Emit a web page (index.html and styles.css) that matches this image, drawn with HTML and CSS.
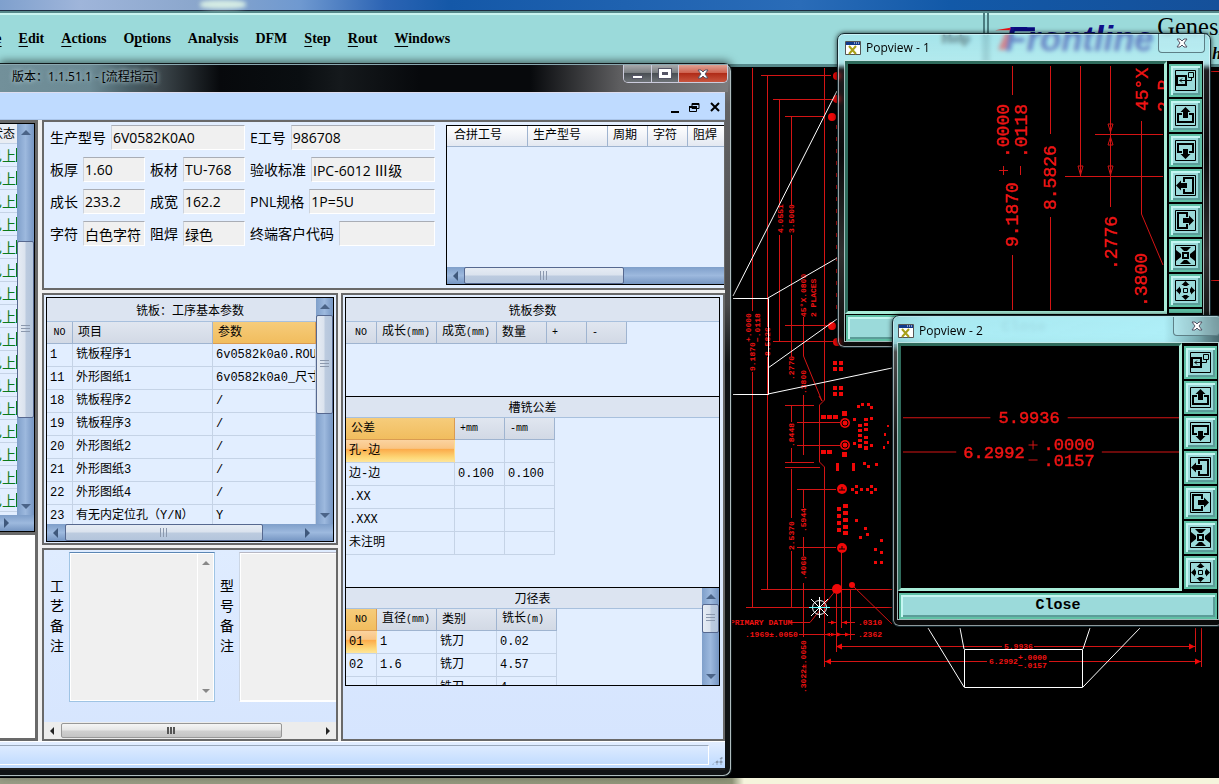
FILE: index.html
```html
<!DOCTYPE html>
<html lang="zh-CN">
<head>
<meta charset="utf-8">
<title>Genesis</title>
<link rel="stylesheet" href="styles.css">
</head>
<body>
<svg class="defs" aria-hidden="true">
  <symbol id="i-home" viewBox="0 0 21 21"><path d="M.5.5h20v20H.5z" fill="none" stroke="#000"/><path d="M2 6h9v9H2z" fill="none" stroke="#000" stroke-width="2"/><path d="M13.500 2.500h5v5h-5zM16.500 7.500v3H4.500M7 8.500l-2 2 2 2" fill="none" stroke="#000"/></symbol>
  <symbol id="i-up" viewBox="0 0 21 21"><path d="M.5.5h20v20H.5z" fill="none" stroke="#000"/><path d="M7 9H3v8h15V9h-4" fill="none" stroke="#000" stroke-width="2"/><path d="M10.500 2l5 5h-2.500v6H8V7H5.500z"/></symbol>
  <symbol id="i-down" viewBox="0 0 21 21"><path d="M.5.5h20v20H.5z" fill="none" stroke="#000"/><path d="M7 12H3V4h15v8h-4" fill="none" stroke="#000" stroke-width="2"/><path d="M10.500 19l5-5h-2.500V9H8v5H5.500z"/></symbol>
  <symbol id="i-left" viewBox="0 0 21 21"><path d="M.5.5h20v20H.5z" fill="none" stroke="#000"/><path d="M9 7V3h9v15H9v-4" fill="none" stroke="#000" stroke-width="2"/><path d="M1 10.500l5-5V8h6v5H6v2.500z"/></symbol>
  <symbol id="i-right" viewBox="0 0 21 21"><path d="M.5.5h20v20H.5z" fill="none" stroke="#000"/><path d="M12 7V3H3v15h9v-4" fill="none" stroke="#000" stroke-width="2"/><path d="M19 10.500l-5-5V8H8v5h6v2.500z"/></symbol>
  <symbol id="i-in" viewBox="0 0 21 21"><path d="M.5.5h20v20H.5z" fill="none" stroke="#000"/><path d="M8 8h5v5H8z" fill="none" stroke="#000" stroke-width="2"/><path d="M5 2h11l-4 4H9zM5 19h11l-4-4H9zM1 5l5 4v3l-5 4zM20 5l-5 4v3l5 4z"/></symbol>
  <symbol id="i-out" viewBox="0 0 21 21"><path d="M.5.5h20v20H.5z" fill="none" stroke="#000"/><path d="M8.500 8.500h4v4h-4z" fill="none" stroke="#000"/><path d="M10.500 1l4 4h-2v1h-4V5h-2zM10.500 20l4-4h-2v-1h-4v1h-2zM1 10.500l4-4v2h1v4H5v2zM20 10.500l-4-4v2h-1v4h1v2z"/></symbol>
  <symbol id="i-win" viewBox="0 0 16 14"><path d="M.5.5h15v13H.5z" fill="#fff" stroke="#555"/><path d="M1 1h14v3H1z" fill="#123a8c"/><path d="M9 2h1M11 2h1M13 2h1" stroke="#fff"/><path d="M4 5l7 8M11 5l-7 8" stroke="#a8a018" stroke-width="2"/></symbol>
  <symbol id="i-x" viewBox="0 0 12 10"><path d="M1 1h3l2 2 2-2h3L8 5l3 4H8L6 7 4 9H1l3-4z" fill="#fff" stroke="#556" stroke-width="1"/></symbol>
</svg>

<div class="desktop">
  <div class="strip"><i></i></div>
  <header class="head">
    <nav class="menu">
      <a href="#" class="cut">Fil<u>e</u></a>
      <a href="#"><u>E</u>dit</a><a href="#"><u>A</u>ctions</a><a href="#">O<u>p</u>tions</a><a href="#">Analysis</a><a href="#">DFM</a><a href="#"><u>S</u>tep</a><a href="#"><u>R</u>out</a><a href="#"><u>W</u>indows</a>
      <a href="#" class="help">Help</a>
    </nav>
    <div class="logo">
      <svg viewBox="990 13 229 50" preserveAspectRatio="xMinYMin slice">
        <path d="M996 30l18-3v3zM999 49l7-16h7l-6 16z" fill="#e11"/>
        <text x="1006" y="50" class="brand">Frontline</text>
        <path d="M1015 27h20v4h-21z" fill="#0a0a80"/>
        <text x="1155" y="35" class="gen">Genesis</text>
        <text x="1209" y="58" class="sub">h</text>
      </svg>
    </div>
  </header>

  <main class="cad">
    <svg viewBox="0 67 1219 711" preserveAspectRatio="xMinYMin slice">
      <g class="r">
        <path d="M752.500 68V311M752.500 372V607M767.500 75V327M767.500 357V589M761 75.500H831M779.500 100V205M779.500 235V341M773 99.500H833M791.500 117V205M791.500 235V357M785 116.500H825M824.500 68V400L819.500 405V462L824.500 467V667M785 325.500H832M773 341.500H837M803.500 317V356L822 401M819 396l3 5M803.500 395V455M785 405.500H814M791.500 406V422M797 422.500H840M797 445.500H840M791.500 448V462M785 462.500H814M785 467.500H820M791.500 469V518M791.500 551V607M797 489.500H836M797 547.500H836M803.500 489V508M803.500 537V556M803.500 583V637M761 589.500H892M746 607.500H892M836 590L810 622.500H791M852 585L892 624M841.500 552V628M836.500 594V652M850.500 590V640M828 622.500H836M842 622.500H855M799 634.500H855M836 646.500H1002M1034 646.500H1195M825 661.500H987M1049 661.500H1201M1195.500 628V652M1201.500 628V667M1211 280.500H1219M1211 71.500H1219"/>
        <path d="M836.500 125V312" stroke-dasharray="4 8"/>
      </g>
      <g class="dot">
        <circle cx="837" cy="76" r="4"/><circle cx="837" cy="99" r="4"/><circle cx="832" cy="117" r="4"/><circle cx="832" cy="326" r="4"/><circle cx="837" cy="342" r="4"/><circle cx="845" cy="423" r="5"/><circle cx="845" cy="445" r="5"/><circle cx="842" cy="489" r="5"/><circle cx="842" cy="548" r="5"/><circle cx="837" cy="589" r="5"/><circle cx="852" cy="585" r="3"/>
        <path d="M833 361h4v4h-4zm6 0h4v4h-4zm-6 6h4v4h-4zm6 0h4v4h-4zM833 386h4v4h-4zm6 0h4v4h-4zm-6 6h4v4h-4zm6 0h4v4h-4zM821 415h5v4h-5zm6 0h5v4h-5zm6 0h5v4h-5zm9-4h5v5h-5zM821 450h5v4h-5zm6 0h5v4h-5zm15 2h5v5h-5zM858 424h4v3h-4zm0 5h4v3h-4zm0 5h4v3h-4zm0 5h4v3h-4zm0 5h4v4h-4zM864 418h4v3h-4zm0 5h4v3h-4zm0 5h4v3h-4zm0 8h4v3h-4zm0 5h4v3h-4zm0 5h4v4h-4zM853 418h3v3h-3zm0 24h3v3h-3zM870 417h3v3h-3zm0 27h3v3h-3zM857 405h3v3h-3zm4-2h3v3h-3zm6 0h3v3h-3zm3 3h3v3h-3zM887 425h2v2h-2zm-3 8h2v3h-2zm3 8h2v3h-2zm-4 5h2v3h-2zM836 463h3v8h-3zm16 0h3v8h-3zm11-1h3v3h-3zm4 3h3v3h-3zm8-2h3v3h-3zM851 488h3v3h-3zm4-3h3v3h-3zm0 6h3v3h-3zm5-3h3v3h-3zm6 0h3v3h-3zm4-3h3v3h-3zm0 6h3v3h-3zm4-3h3v3h-3zM837 507h4v4h-4zm0 7h4v4h-4zm0 7h4v4h-4zm0 7h4v4h-4zM843 504h5v4h-5zm0 7h5v4h-5zm0 7h5v4h-5zm0 7h5v4h-5zm0 6h5v4h-5zM855 519h3v3h-3zm9 8h3v3h-3zm2 6h3v3h-3zm-7 3h3v3h-3zM880 539h3v3h-3zm-6 9h3v3h-3zm6 3h3v3h-3zm-6 10h3v3h-3zm6 0h3v3h-3z"/>
        <path d="M836 646.500l6-3v6zM1195 646.500l-6-3v6zM825 661.500l6-3v6zM1201 661.500l-6-3v6zM825 634.500l6-2v4zm11 0l-6-2v4zM842 634.500l-5-2v4zm8 0l-5-2v4zM836 622.500l-5-2v4zm6 0l5-2v4z"/>
      </g>
      <g fill="none" stroke="#000"><circle cx="845" cy="423" r="3"/><circle cx="845" cy="445" r="3"/><path d="M839 490h6M842 487v3M839 549h6M842 546v3"/></g>
      <g class="t8">
        <text transform="translate(755 371) rotate(-90)">9.1870</text>
        <text transform="translate(751 342) rotate(-90)">+.0000</text>
        <text transform="translate(760 342) rotate(-90)">−.0118</text>
        <text transform="translate(770 356) rotate(-90)">8.5826</text>
        <text transform="translate(783 233) rotate(-90)">4.0551</text>
        <text transform="translate(794 233) rotate(-90)">3.5000</text>
        <text transform="translate(806 317) rotate(-90)">45°X.0800</text>
        <text transform="translate(816 317) rotate(-90)">2 PLACES</text>
        <text transform="translate(794 380) rotate(-90)">.2776</text>
        <text transform="translate(806 394) rotate(-90)">.3800</text>
        <text transform="translate(794 447) rotate(-90)">.8448</text>
        <text transform="translate(794 550) rotate(-90)">2.5370</text>
        <text transform="translate(806 532) rotate(-90)">.5944</text>
        <text transform="translate(806 580) rotate(-90)">.4060</text>
        <text transform="translate(806 693) rotate(-90)">.3022±.0050</text>
        <text x="730" y="625">PRIMARY DATUM</text><text x="858" y="625">.0310</text>
        <text x="745" y="637">.1969±.0050</text><text x="858" y="637">.2362</text>
        <text x="1004" y="649">5.9936</text><text x="989" y="664">6.2992</text>
        <text x="1018" y="660">+.0000</text><text x="1018" y="668">−.0157</text>
      </g>
      <path class="w" d="M733 296L837 91M733 298.500H768.500V394.500H733M768 298L837 258M768 368L837 319M768 394L892 368M964.500 649.500H1082.500V687.500H964.500zM928 628L964 687M960 628L964 649M1090 628L1083 649M1140 628L1083 687"/>
      <g fill="none" stroke="#fff"><circle cx="819.500" cy="607.500" r="7"/><path d="M819.500 597v21M811 599l17 17M828 599l-17 17"/><path d="M809 607.500h21" stroke="#6ff"/></g>
    </svg>
  </main>
  <div class="foot"></div>

  <section class="pop p1">
    <div class="ptitle"><svg class="wi"><use href="#i-win"/></svg><span>Popview - 1</span><button class="px" aria-label="关闭"><svg><use href="#i-x"/></svg></button></div>
    <div class="pbody">
      <div class="view">
        <svg viewBox="848 64 316 247" preserveAspectRatio="xMinYMin slice">
          <path class="r" d="M1012.500 66V95M1012.500 255V310M1050.500 66V134M1050.500 217V310M1080.500 66V176M1110.500 66V207M1095 134.500H1163M1065 176.500H1163M1141.500 121V214L1163 265"/>
          <path class="r" d="M1078 166h5l-2.500 9zM1108 124h5l-2.500 8zM1108 145h5l-2.500-8zM1108 166h5l-2.500 9zM1003.500 166v9M999 170.500h9M1020.500 166v9"/>
          <g class="t18">
            <text transform="translate(1018 247) rotate(-90)">9.1870</text>
            <text transform="translate(1009 158) rotate(-90)">.0000</text>
            <text transform="translate(1027 158) rotate(-90)">.0118</text>
            <text transform="translate(1056 210) rotate(-90)">8.5826</text>
            <text transform="translate(1117 270) rotate(-90)">.2776</text>
            <text transform="translate(1147 307) rotate(-90)">.3800</text>
            <text transform="translate(1148 111) rotate(-90)">45°X</text>
            <text transform="translate(1170 112) rotate(-90)">2 P</text>
          </g>
        </svg>
      </div>
      <div class="tools">
        <button aria-label="home"><svg><use href="#i-home"/></svg></button><button aria-label="up"><svg><use href="#i-up"/></svg></button><button aria-label="down"><svg><use href="#i-down"/></svg></button><button aria-label="left"><svg><use href="#i-left"/></svg></button><button aria-label="right"><svg><use href="#i-right"/></svg></button><button aria-label="zoom in"><svg><use href="#i-in"/></svg></button><button aria-label="zoom out"><svg><use href="#i-out"/></svg></button><i></i>
      </div>
      <button class="close">Close</button>
    </div>
  </section>

  <section class="pop p2">
    <div class="ptitle"><svg class="wi"><use href="#i-win"/></svg><span>Popview - 2</span><button class="px" aria-label="关闭"><svg><use href="#i-x"/></svg></button></div>
    <div class="pbody">
      <div class="view">
        <svg viewBox="901 346 278 241" preserveAspectRatio="xMinYMin slice">
          <path class="r" d="M903 417.500H990M1067 417.500H1178M903 451.500H956M1101 451.500H1178M1028 444.500h9M1032.500 440v9M1028 459.500h9"/>
          <g class="t17"><text x="998" y="423">5.9936</text><text x="963" y="458">6.2992</text><text x="1043" y="450">.0000</text><text x="1043" y="466">.0157</text></g>
        </svg>
      </div>
      <div class="tools">
        <button aria-label="home"><svg><use href="#i-home"/></svg></button><button aria-label="up"><svg><use href="#i-up"/></svg></button><button aria-label="down"><svg><use href="#i-down"/></svg></button><button aria-label="left"><svg><use href="#i-left"/></svg></button><button aria-label="right"><svg><use href="#i-right"/></svg></button><button aria-label="zoom in"><svg><use href="#i-in"/></svg></button><button aria-label="zoom out"><svg><use href="#i-out"/></svg></button>
      </div>
      <button class="close">Close</button>
    </div>
  </section>

  <section class="app">
    <div class="title"><span>版本：1.1.51.1 - [流程指示]</span>
      <div class="caps"><button class="c1" aria-label="最小化"><i></i></button><button class="c2" aria-label="最大化"><i></i></button><button class="c3" aria-label="关闭"><svg><use href="#i-x"/></svg></button></div>
    </div>
    <div class="client">
      <div class="mdi">
        <svg viewBox="0 0 50 12"><path d="M0 10h8v2H0z"/><path d="M21 2.500h7v5h-7zM18.500 5.500h7v5h-7z" fill="#bfdbff" stroke="#000"/><path d="M21 2h7v2h-7zM18 5h8v2h-8z"/><path d="M40 2l8 8M48 2l-8 8" stroke="#000" stroke-width="2"/></svg>
      </div>
      <div class="work">
        <aside class="side">
          <div class="sgrid">
            <div class="scol">
              <div class="sh">状态</div>
              <div>已上<b></b></div><div>已上<b></b></div><div>已上<b></b></div><div>已上<b></b></div><div>已上<b></b></div><div>已上<b></b></div><div>已上<b></b></div><div>已上<b></b></div><div>已上<b></b></div><div>已上<b></b></div><div>已上<b></b></div><div>已上<b></b></div><div>已上<b></b></div><div>已上<b></b></div><div>已上<b></b></div><div>已上<b></b></div>
            </div>
            <div class="vs s1"><i class="au"></i><i class="thumb"></i><i class="ad"></i></div>
            <div class="shs"><i class="ar"></i></div>
          </div>
          <div class="blank"></div>
        </aside>
        <div class="main">
          <section class="panel top">
            <form class="form">
              <div class="row"><div class="l"><label for="a">生产型号</label><input id="a" value="6V0582K0A0" readonly></div><div class="rr"><label for="b">E工号</label><input id="b" value="986708" readonly></div></div>
              <div class="row"><div class="l"><label for="c">板厚</label><input id="c" value="1.60" readonly><label for="d">板材</label><input id="d" value="TU-768" readonly></div><div class="rr"><label for="e">验收标准</label><input id="e" value="IPC-6012 Ⅲ级" readonly></div></div>
              <div class="row"><div class="l"><label for="f">成长</label><input id="f" value="233.2" readonly><label for="g">成宽</label><input id="g" value="162.2" readonly></div><div class="rr"><label for="h">PNL规格</label><input id="h" value="1P=5U" readonly></div></div>
              <div class="row"><div class="l"><label for="i">字符</label><input id="i" value="白色字符" readonly><label for="j">阻焊</label><input id="j" value="绿色" readonly></div><div class="rr"><label for="k">终端客户代码</label><input id="k" value="" readonly></div></div>
            </form>
            <div class="merge">
              <table class="t tm"><colgroup><col class="w81"><col class="w80"><col class="w40"><col class="w40"><col class="w40"></colgroup><thead><tr><th>合拼工号</th><th>生产型号</th><th>周期</th><th>字符</th><th>阻焊</th></tr></thead></table>
              <div class="hs h1"><i class="al"></i><i class="thumb"></i></div>
            </div>
          </section>

          <div class="lower">
            <div class="lcol">
              <section class="panel pr">
                <div class="grid g2">
                  <div class="cell">
                    <div class="cap off">铣板：工序基本参数</div>
                    <table class="t"><colgroup><col class="w26"><col class="w140"><col></colgroup>
                      <thead><tr><th class="no"><small>NO</small></th><th>项目</th><th class="hot">参数</th></tr></thead>
                      <tbody>
                        <tr><td>1</td><td>铣板程序1</td><td>6v0582k0a0.ROU</td></tr>
                        <tr><td>11</td><td>外形图纸1</td><td>6v0582k0a0_尺寸</td></tr>
                        <tr><td>18</td><td>铣板程序2</td><td>/</td></tr>
                        <tr><td>19</td><td>铣板程序3</td><td>/</td></tr>
                        <tr><td>20</td><td>外形图纸2</td><td>/</td></tr>
                        <tr><td>21</td><td>外形图纸3</td><td>/</td></tr>
                        <tr><td>22</td><td>外形图纸4</td><td>/</td></tr>
                        <tr><td>23</td><td>有无内定位孔（Y/N）</td><td>Y</td></tr>
                      </tbody></table>
                  </div>
                  <div class="vs s2"><i class="au"></i><i class="thumb"></i><i class="ad"></i></div>
                  <div class="hs h2"><i class="al"></i><i class="thumb"></i><i class="ar"></i></div>
                </div>
              </section>
              <section class="panel notes">
                <div class="nrow">
                  <label for="n1">工艺备注</label>
                  <div class="area"><textarea id="n1" readonly></textarea><div class="as"><i class="au"></i><i class="ad"></i></div></div>
                  <label for="n2">型号备注</label>
                  <div class="area wide"><textarea id="n2" readonly></textarea></div>
                </div>
                <div class="hs h3"><i class="al"></i><i class="thumb"></i><i class="ar"></i></div>
              </section>
            </div>
            <section class="panel rcol">
              <div class="grid g3">
                <div class="q1">
                  <div class="cap">铣板参数</div>
                  <table class="t fixed"><colgroup><col class="w31"><col class="w60"><col class="w60"><col class="w50"><col class="w40"><col class="w40"></colgroup><thead><tr><th class="no"><small>NO</small></th><th>成长<small>(mm)</small></th><th>成宽<small>(mm)</small></th><th>数量</th><th><small>+</small></th><th><small>-</small></th></tr></thead></table>
                </div>
                <div class="q2">
                  <div class="cap">槽铣公差</div>
                  <table class="t fixed"><colgroup><col class="w109"><col class="w50"><col class="w50"></colgroup><thead><tr><th class="hot">公差</th><th><small>+mm</small></th><th><small>-mm</small></th></tr></thead>
                    <tbody><tr><td class="sel">孔-边</td><td></td><td></td></tr><tr><td>边-边</td><td>0.100</td><td>0.100</td></tr><tr><td>.XX</td><td></td><td></td></tr><tr><td>.XXX</td><td></td><td></td></tr><tr><td>未注明</td><td></td><td></td></tr></tbody></table>
                </div>
                <div class="q3">
                  <div class="cell">
                    <div class="cap off">刀径表</div>
                    <table class="t fixed"><colgroup><col class="w31"><col class="w60"><col class="w60"><col class="w60"></colgroup><thead><tr><th class="hot no"><small>NO</small></th><th>直径<small>(mm)</small></th><th>类别</th><th>铣长<small>(m)</small></th></tr></thead>
                      <tbody><tr><td class="sel">01</td><td>1</td><td>铣刀</td><td>0.02</td></tr><tr><td>02</td><td>1.6</td><td>铣刀</td><td>4.57</td></tr><tr><td></td><td></td><td>铣刀</td><td>4</td></tr></tbody></table>
                  </div>
                  <div class="vs s3"><i class="au"></i><i class="thumb"></i><i class="ad"></i></div>
                </div>
              </div>
            </section>
          </div>
        </div>
      </div>
      <div class="status"><div></div><i></i></div>
    </div>
  </section>
</div>
</body>
</html>
```
FILE: styles.css
```css
* { box-sizing: border-box; }
body { margin: 0; background: #000; font-family: "Open Sans", "Noto Sans CJK SC", sans-serif; }
button { padding: 0; border: 0; font: inherit; }
svg { display: block; }
.defs { position: absolute; width: 0; height: 0; }
.desktop { position: relative; height: 100vh; min-height: 640px; overflow: hidden; display: flex; flex-direction: column; }

/* host application */
.strip { height: 11px; background: linear-gradient(90deg, #7fa0cd 0, #9fb5da 80px, #8aa6cc 200px, #6f99d0 300px, #2c64b4 385px, #1458a8 450px, #2a6cb8 800px, #1259a8 950px, #15509a 1219px); border-bottom: 1px solid #1c2c40; }
.strip i { display: block; height: 9px; width: 46px; margin-left: 200px; background: #d5ece4; filter: blur(2px); border-radius: 40%; }
.head { display: flex; height: 56px; background: #9bdada; border-top: 2px solid #56888a; border-bottom: 3px solid #56888a; box-shadow: inset 0 2px #c8f4f0; }
.menu { flex: 1; display: flex; align-items: center; gap: 17px; overflow: hidden; border-right: 2px solid #4b7c80; }
.menu a { color: #000; text-decoration: none; font: bold 14px/18px "Liberation Serif", serif; }
.menu u { text-underline-offset: 3px; }
.menu .cut { margin-left: -21px; }
.menu .help { margin: 0 13px 0 auto; }
.logo { width: 19%; margin-left: 2px; border-left: 2px solid #4b7c80; overflow: hidden; }
.logo svg { width: 100%; height: 100%; }
.brand { font: italic bold 34px "Liberation Sans", sans-serif; fill: #10108a; }
.gen { font: 24px "Liberation Serif", serif; }
.sub { font: italic bold 16px "Liberation Serif", serif; }
.cad { flex: 1; min-height: 0; display: flex; overflow: hidden; background: #000; }
.cad svg { flex: none; width: 1219px; height: 711px; }
.foot { height: 6px; background: linear-gradient(90deg, #999d86 0, #8f9478 732px, #f5f4dc 744px); }
.r { fill: none; stroke: #d41414; stroke-width: 1; }
.w { fill: none; stroke: #fff; stroke-width: 1; }
.dot { fill: #f00808; }
.t8 text { font: bold 8px "Liberation Mono", monospace; fill: #f01212; }
.t17 text { font: 17px "Liberation Mono", monospace; fill: #f01414; stroke: #f01414; stroke-width: .5; }
.t18 text { font: 18px "Liberation Mono", monospace; fill: #f01414; stroke: #f01414; stroke-width: .5; }

/* pop-up views */
.pop { position: absolute; border: 1px solid #14282e; border-radius: 7px; box-shadow: inset 0 0 0 1px rgba(230,250,255,.6), 0 0 5px rgba(0,0,0,.8); backdrop-filter: blur(2px); display: flex; flex-direction: column; }
.p1 { top: 33px; right: 8px; width: 374px; padding: 0 7px 6px; background: linear-gradient(rgba(175,238,250,.5) 0, rgba(200,248,255,.55) 30px, rgba(60,60,65,.5) 36px, rgba(20,20,22,.5) 120px, rgba(120,120,120,.4) 220px, rgba(20,20,20,.5)); }
.p2 { top: 315px; right: -5px; width: 332px; padding: 0 5px 7px; background: linear-gradient(rgba(120,190,198,.7) 0, rgba(150,220,228,.75) 28px, rgba(150,150,150,.5) 36px, rgba(50,50,52,.5) 120px, rgba(20,20,20,.5)); }
.ptitle { display: flex; align-items: center; height: 27px; gap: 5px; font-size: 12px; line-height: 16px; color: #000; }
.p2 .ptitle { background: linear-gradient(90deg, rgba(190,245,255,.3), rgba(180,243,252,.75) 40px, rgba(180,243,252,.85) 270px, rgba(40,60,65,.6)); margin: 1px -4px -1px; padding: 0 4px; border-radius: 6px 6px 0 0; }
.wi { width: 16px; height: 14px; }
.ptitle .px { width: 47px; height: 19px; margin: 0 -2px 0 auto; align-self: flex-start; display: grid; place-items: center; background: rgba(200,240,245,.4); border: 1px solid #5d7f86; border-top: 0; border-radius: 0 0 4px 4px; }
.px svg { width: 12px; height: 10px; }
.pbody { display: grid; grid-template-columns: 1fr 33px; column-gap: 2px; padding: 0 1px 0 0; background: #000; box-shadow: 0 0 0 1px rgba(200,230,230,.8); }
.view { height: 253px; background: #000; border: 3px solid #a8ecd8; border-top-color: #2f6b5c; border-left-color: #2f6b5c; overflow: hidden; }
.p2 .view { height: 248px; }
.view svg { width: 100%; height: 100%; }
.tools { display: flex; flex-direction: column; gap: 2px; padding-top: 3px; }
.tools button { height: 33px; display: grid; place-items: center; background: #9bdada; border: 2px solid #5fc0a5; box-shadow: inset 2px 2px #c4f6f2, inset -2px -2px #5b9c98; }
.tools svg { width: 21px; height: 21px; }
.tools i { height: 4px; background: #5fc0a5; }
.close { grid-column: 1 / -1; height: 26px; margin: 1px 0 0 1px; background: #9bdada; border: 2px solid #5fc0a5; box-shadow: inset 2px 2px #c4f6f2, inset -2px -2px #5b9c98; font: bold 15px/18px "Liberation Mono", monospace; color: #000; }
.p2 .close { margin-top: 2px; }

/* process window */
.app { position: absolute; left: 0; top: 63px; bottom: 7px; width: 732px; max-width: 100%; display: flex; flex-direction: column; padding: 0 6px 6px 0; border: 1px solid #10181a; border-left: 0; border-radius: 0 8px 8px 0; background: linear-gradient(#8a8a8c 0, #636365 40px, #4a4a4c 240px, #101315 300px, #101315); box-shadow: inset 0 1px #9bb, inset -1px -1px #aebcbe, 0 -2px 9px rgba(0,0,0,.55); }
.title { display: flex; justify-content: space-between; height: 28px; margin-right: -3px; background: linear-gradient(90deg, #72909a 0, #6c8a94 90px, rgba(70,92,100,.95) 130px, #3c464b 160px, #07090c 220px, #0a0e11 300px, #15191c 340px, #07090c 420px, #07090c 530px, #5e5e60 620px, #7c7c7e); border-top: 1px solid #8aa8b0; }
.title span { font-size: 12px; line-height: 24px; padding-left: 12px; color: #000; text-shadow: 0 0 5px #a9c4cc, 0 0 5px #a9c4cc; }
.caps { display: flex; height: 18px; border: 1px solid #ccd; border-top: 0; border-radius: 0 0 5px 5px; overflow: hidden; }
.caps button { display: grid; place-items: center; border-right: 1px solid #ccd; background: linear-gradient(#a7a9ab, #7b7f82 45%, #4a4f54 50%, #6e7377); }
.caps .c1 { width: 28px; } .caps .c2 { width: 27px; }
.caps .c3 { width: 48px; border: 0; background: linear-gradient(#dfa294, #cf6350 45%, #b02c18 50%, #c8553e); }
.caps svg { width: 12px; height: 10px; }
.c1 i { width: 11px; height: 4px; background: #fff; border: 1px solid #556; margin-top: 6px; }
.c2 i { width: 12px; height: 9px; border: 3px solid #fff; outline: 1px solid #556; background: #556; }
.client { flex: 1; min-height: 0; display: flex; flex-direction: column; background: #f0f0f0; border-top: 1px solid #dde; }
.mdi { display: flex; justify-content: flex-end; height: 27px; padding: 8px 4px; background: #bfdbff; border-bottom: 1px solid #a9c4e8; }
.mdi svg { width: 50px; height: 12px; }
.work { flex: 1; min-height: 0; display: flex; gap: 4px; }
.side { width: 38px; display: flex; flex-direction: column; background: #696969; padding: 3px 3px 3px 0; gap: 3px; }
.sgrid { flex: 2 1 0; min-height: 0; display: grid; grid-template: 1fr 16px / 1fr 17px; background: #e2eeff; border: 1px solid #000; border-left: 0; }
.blank { flex: 1 1 0; background: #fff; }
.scol { overflow: hidden; min-height: 0; }
.scol div { display: flex; justify-content: flex-end; height: 23px; font: 14px/22px "Noto Sans CJK SC", sans-serif; color: #0a7a1a; border-bottom: 1px solid #c5d3e6; white-space: nowrap; }
.scol b { width: 1px; height: 14px; margin: 4px 0 0 0; background: #0a7a1a; flex: none; }
.scol .sh { height: 20px; font-size: 12px; line-height: 18px; color: #000; background: #e9edf4; padding-right: 2px; }
.main { flex: 1; min-width: 0; display: flex; flex-direction: column; gap: 3px; }
.panel { border: 2px solid #696969; background: #e2eeff; overflow: hidden; }
.top { display: flex; height: 170px; padding: 3px 0 3px 6px; gap: 11px; border-right-width: 1px; }
.form { display: flex; flex-direction: column; gap: 7px; width: 385px; flex: none; }
.row, .l, .rr { display: flex; gap: 5px; }
.l { width: 195px; } .rr { width: 185px; }
.row label { flex: none; font-size: 14px; line-height: 25px; white-space: nowrap; }
.row input { flex: 1; min-width: 0; height: 25px; padding: 0 1px; border: 1px solid #fff; border-top-color: #a9adb5; border-left-color: #cdd3dc; background: #f0f0f0; font: 14px/20px "Open Sans", "Noto Sans CJK SC", sans-serif; color: #000; outline: 0; }
.merge { flex: 1; min-width: 0; display: flex; flex-direction: column; justify-content: space-between; border: 1px solid #000; border-right: 0; overflow: hidden; }

.t { table-layout: fixed; border-spacing: 0; width: 100%; font: 12px/20px "Liberation Mono", "Noto Sans CJK SC", monospace; color: #000; }
.fixed, .tm { width: 1px; }
.t th, .t td { padding: 0 0 0 3px; text-align: left; font-weight: normal; white-space: nowrap; overflow: hidden; border-right: 1px solid #c5d3e6; border-bottom: 1px solid #c5d3e6; }
.t th { height: 21px; padding-left: 5px; border-color: #9fb4d0; background: linear-gradient(#e0e6f0, #d2d9e5); }
.t .no { text-align: center; padding: 0; }
.t td { height: 23px; line-height: 22px; font-size: 12px; }
.t small { font-size: 10px; }
.t .hot { background: linear-gradient(#f6cc7b, #f1bd5e); border-color: #d99b52; }
.t .sel { background: linear-gradient(#fbd3a0, #f9c584 38%, #fcab4a 42%, #fdd878 80%, #fee59a); border-right-color: #fcdc90; }
.t.tm th { background: linear-gradient(#fff, #e3e8f1); padding-left: 7px; }
.t.tm th + th { padding-left: 5px; }
.w26 { width: 26px; } .w31 { width: 31px; } .w40 { width: 40px; } .w50 { width: 50px; } .w60 { width: 60px; } .w80 { width: 80px; } .w81 { width: 81px; } .w109 { width: 109px; } .w140 { width: 140px; }
.cap { height: 24px; text-align: center; font: 12px/23px "Noto Sans CJK SC", sans-serif; background: #dce4f1; border-bottom: 1px solid #a8c0dd; }
.cap.off { padding-left: 17px; }
.lower { flex: 1; min-height: 0; display: flex; gap: 3px; }
.lcol { width: 296px; flex: none; display: flex; flex-direction: column; gap: 3px; }
.pr { flex: none; height: 252px; padding: 2px; }
.grid { border: 1px solid #000; background: #e2eeff; }
.g2 { height: 245px; display: grid; grid-template: minmax(0, 1fr) 17px / minmax(0, 1fr) 17px; }
.cell { min-height: 0; min-width: 0; overflow: hidden; }
.h2 { grid-column: 1 / -1; padding-right: 17px; }
.rcol { flex: 1; min-width: 0; padding: 2px 3px 0 2px; background: linear-gradient(#e2eeff, #d6e5fe); }
.g3 .cap { height: 21px; line-height: 19px; }
.g3 .q1 .cap { height: 24px; line-height: 23px; }
.q1 { height: 99px; border-bottom: 1px solid #000; }
.q2 { height: 191px; border-bottom: 1px solid #000; }
.q3 { height: 97px; display: grid; grid-template-columns: minmax(0, 1fr) 17px; }

/* scroll bars */
.vs, .hs, .shs { display: flex; background: linear-gradient(90deg, #7f9fca, #9db9de 50%, #7595c2); }
.hs, .shs { background: linear-gradient(#7f9fca, #9db9de 50%, #7595c2); align-items: center; height: 17px; }
.vs { flex-direction: column; align-items: center; }
.shs { grid-column: 1 / -1; padding-left: 4px; height: auto; }
.thumb { flex: none; border: 1px solid #56688f; border-radius: 2px; background: linear-gradient(90deg, #e6ecf4, #dbe3ee 45%, #bccbdf 55%, #b4c5dc); position: relative; }
.vs .thumb { width: 17px; }
.hs .thumb { height: 17px; background: linear-gradient(#e6ecf4, #dbe3ee 45%, #bccbdf 55%, #b4c5dc); }
.thumb::after { content: ""; position: absolute; inset: 0; margin: auto; width: 9px; height: 9px; background: repeating-linear-gradient(#8b98ad 0 1px, transparent 1px 3px); }
.hs .thumb::after { background: repeating-linear-gradient(90deg, #8b98ad 0 1px, transparent 1px 3px); }
.h1 .thumb::after, .h2 .thumb::after { width: 8px; }
.au, .ad, .al, .ar { flex: none; width: 0; height: 0; border: 5px solid transparent; }
.au { border-top: 0; border-bottom-color: #4b6488; margin: 6px 0; }
.ad { border-bottom: 0; border-top-color: #4b6488; margin: auto 0 6px; }
.al { border-left: 0; border-right-color: #3f587c; margin: 0 6px; }
.ar { border-right: 0; border-left-color: #3f587c; margin: 0 6px 0 auto; }
.shs .ar { margin: 0; }
.s1 .thumb { height: 177px; margin-top: 100px; }
.s2 .thumb { height: 99px; }
.s3 .thumb { height: 29px; margin-top: -1px; }
.h1 .thumb { width: 160px; }
.h2 .thumb { width: 198px; margin-left: 1px; }
.h3 { background: #ececec; flex: none; }
.h3 .al, .h3 .ar { border-width: 4px; margin-inline: 6px; }
.h3 .al { border-left: 0; border-right-color: #222; }
.h3 .ar { border-right: 0; border-left-color: #222; margin-left: auto; }
.h3 .thumb { width: 221px; height: 15px; border-color: #979797; background: linear-gradient(#f5f5f5, #e5e5e5 48%, #d0d0d0 52%, #c4c4c4); }
.h3 .thumb { margin-left: 1px; }
.h3 .thumb::after { height: 7px; background: repeating-linear-gradient(90deg, #555 0 2px, transparent 2px 3px); }

.notes { flex: 1; min-height: 0; display: flex; flex-direction: column; justify-content: space-between; background: linear-gradient(#dfecff, #d6e5fe); }
.nrow { display: flex; gap: 5px; padding: 2px 0 0 6px; overflow: hidden; }
.nrow label { flex: none; width: 14px; font-size: 14px; line-height: 20px; padding-top: 24px; word-break: break-all; }
.area { display: flex; flex: none; width: 146px; height: 150px; border: 1px solid #9fc4e4; border-top-color: #5b86b4; background: #f0f0f0; box-shadow: inset 0 0 0 1px #fff; }
.area textarea { flex: 1; min-width: 0; border: 0; resize: none; background: transparent; outline: 0; overflow: hidden; }
.as { display: flex; flex-direction: column; align-items: center; width: 17px; border-left: 1px solid #fff; }
.as .au, .as .ad { border-width: 4px; }
.as .au { border-top: 0; border-bottom-color: #888; margin-top: 8px; }
.as .ad { border-bottom: 0; border-top-color: #888; margin-bottom: 8px; }
.area.wide { border-color: #b8b8c4 #fff #fff #ccd6e4; }

.status { flex: none; height: 29px; display: flex; padding-top: 3px; border-top: 1px solid #fff; background: linear-gradient(#e3eeff, #bcd9ff); border-bottom: 2px solid #222; }
.status div { flex: 1; margin-bottom: 3px; border: 1px solid #fff; border-left: 0; border-top-color: #9aa8bb; }
.status i { width: 12px; margin: 11px 2px 3px 2px; background: radial-gradient(circle, #8a9ab0 1px, transparent 2px) 0 0 / 4px 4px; clip-path: polygon(100% 0, 100% 100%, 0 100%); }
```
